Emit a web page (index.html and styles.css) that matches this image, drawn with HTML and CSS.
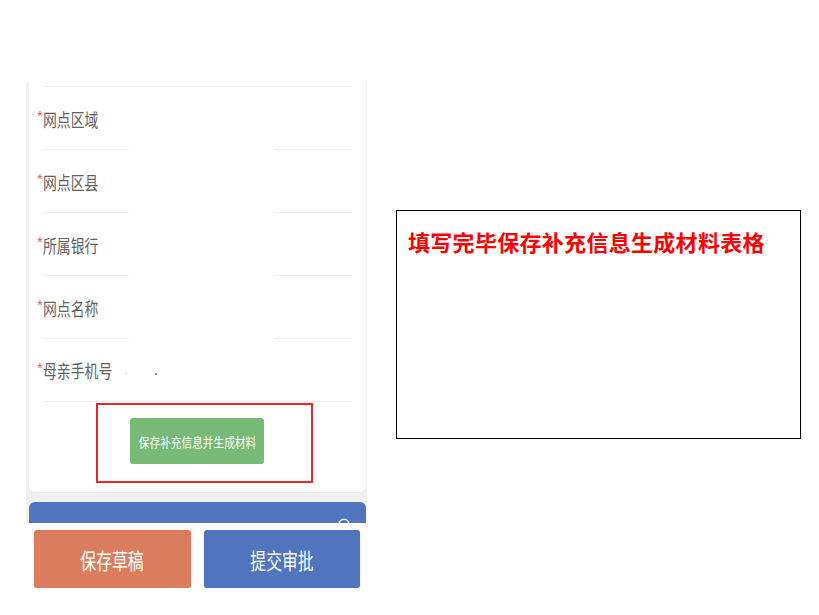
FILE: index.html
```html
<!DOCTYPE html>
<html lang="zh-CN">
<head>
<meta charset="utf-8">
<title>补充信息</title>
<link rel="stylesheet" href="styles.css">
</head>
<body>
<main class="page">
  <section class="phone">
    <div class="screen">
      <div class="card">
        <div class="divider"></div>
        <div class="row masked"><span class="star">*</span><span class="label">网点区域</span></div>
        <div class="row masked"><span class="star">*</span><span class="label">网点区县</span></div>
        <div class="row masked"><span class="star">*</span><span class="label">所属银行</span></div>
        <div class="row masked"><span class="star">*</span><span class="label">网点名称</span></div>
        <div class="row full"><span class="star">*</span><span class="label">母亲手机号</span><span class="redacted"><i></i><i></i><i></i><i class="dark"></i></span></div>
        <div class="actions">
          <div class="highlight">
            <button class="gen-btn"><span class="gen-text">保存补充信息并生成材料</span></button>
          </div>
        </div>
      </div>
      <div class="bar">
        <svg class="bar-icon" width="12" height="12" viewBox="0 0 12 12"><circle cx="6" cy="6" r="4.8" fill="none" stroke="#ffffff" stroke-width="1.4" opacity="0.85"/></svg>
      </div>
    </div>
    <div class="footer">
      <button class="foot-btn draft"><span class="foot-text">保存草稿</span></button>
      <button class="foot-btn submit"><span class="foot-text">提交审批</span></button>
    </div>
  </section>
  <aside class="note">
    <p class="note-text">填写完毕保存补充信息生成材料表格</p>
  </aside>
</main>
</body>
</html>
```

FILE: styles.css
```css
html, body {
  margin: 0;
  padding: 0;
  background: #ffffff;
}

body {
  font-family: "Noto Sans CJK SC", "Noto Sans", sans-serif;
}

.page {
  display: flex;
  align-items: flex-start;
  gap: 29px;
  padding: 82px 0 0 26px;
}

.phone {
  width: 341px;
  display: flex;
  flex-direction: column;
}

.screen {
  height: 441px;
  overflow: hidden;
  background: #f1f1f1;
  padding: 0 1px 0 3px;
  display: flex;
  flex-direction: column;
}

.card {
  background: #ffffff;
  height: 410px;
  flex: none;
  box-sizing: border-box;
  padding: 4px 14px 0 14px;
  border-radius: 0 0 6px 6px;
  box-shadow: 0 1px 1px rgba(0, 0, 0, 0.04);
}

.divider {
  height: 1px;
  background: #efefef;
}

.row {
  height: 63px;
  box-sizing: border-box;
  display: flex;
  align-items: center;
}

.row.full {
  border-bottom: 1px solid #efefef;
}

.row.masked {
  background:
    linear-gradient(#efefef, #efefef) left bottom / 86px 1px no-repeat,
    linear-gradient(#efefef, #efefef) right bottom / 78px 1px no-repeat;
}

.star {
  font-family: "Liberation Sans", sans-serif;
  font-size: 15px;
  line-height: 1;
  color: #e06262;
  margin-left: -6px;
  width: 6px;
  align-self: center;
  margin-top: -6px;
}

.label {
  display: inline-block;
  font-size: 18px;
  line-height: 1;
  color: #626262;
  transform: scaleX(0.77);
  transform-origin: left center;
}

.redacted {
  display: flex;
  gap: 14px;
  margin-left: -40px;
  margin-top: 8px;
}

.redacted i {
  display: block;
  width: 2px;
  height: 1px;
  background: #d6d6d6;
}

.redacted i.dark {
  margin-left: 14px;
  width: 2px;
  height: 2px;
  background: #8a8a8a;
}

.actions {
  padding: 1px 0 0 53px;
}

.highlight {
  width: 217px;
  height: 80px;
  box-sizing: border-box;
  border: 2px solid #e8262b;
  padding: 13px 0 0 32px;
}

.gen-btn {
  width: 134px;
  height: 46px;
  border: none;
  border-radius: 3px;
  background: #76ba75;
  padding: 0;
  display: flex;
  align-items: center;
  justify-content: center;
  font-family: inherit;
  white-space: nowrap;
}

.gen-text {
  display: inline-block;
  font-size: 13px;
  line-height: 1;
  color: #ffffff;
  transform: scaleX(0.82);
}

.bar {
  flex: none;
  margin-top: 10px;
  height: 40px;
  background: #5174bf;
  border-radius: 6px 6px 0 0;
  display: flex;
  justify-content: flex-end;
  padding: 16px 16px 0 0;
  box-sizing: border-box;
}

.footer {
  display: flex;
  gap: 13px;
  padding: 7px 0 0 8px;
}

.foot-btn {
  height: 58px;
  border: none;
  border-radius: 3px;
  padding: 0;
  display: flex;
  align-items: center;
  justify-content: center;
  font-family: inherit;
  box-shadow: 0 1px 2px rgba(0, 0, 0, 0.15);
}

.foot-btn.draft {
  width: 157px;
  background: #db7c5e;
}

.foot-btn.submit {
  width: 156px;
  background: #5174bf;
}

.foot-text {
  display: inline-block;
  font-size: 22px;
  line-height: 1;
  color: #ffffff;
  transform: scaleX(0.72);
}

.note {
  margin-top: 128px;
  width: 405px;
  height: 229px;
  box-sizing: border-box;
  border: 1px solid #000000;
  padding: 19px 0 0 11px;
}

.note-text {
  margin: 0;
  font-size: 22px;
  line-height: 1;
  font-weight: bold;
  color: #ff0000;
  letter-spacing: 0.3px;
  white-space: nowrap;
}
```
